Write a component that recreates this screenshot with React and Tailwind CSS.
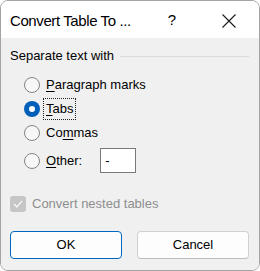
import React from 'react';

const font = { fontFamily: '"Liberation Sans", Arial, sans-serif' };

function Radio({ checked }) {
  return checked ? (
    <span className="flex h-4 w-4 shrink-0 items-center justify-center rounded-full bg-[#005fb8]">
      <span className="h-[6px] w-[6px] rounded-full bg-white" />
    </span>
  ) : (
    <span className="h-4 w-4 shrink-0 rounded-full border border-[#858585] bg-[#f7f7f7]" />
  );
}

function Option({ checked, focused, children }) {
  return (
    <div className="flex h-6 items-center">
      <Radio checked={checked} />
      <span
        className={`ml-[3px] px-[2px] py-[2px] leading-[16px] border ${focused ? 'border-dotted border-[#222]' : 'border-transparent'}`}
      >
        {children}
      </span>
    </div>
  );
}

export default function App() {
  return (
    <div className="h-[271px] w-[260px] bg-white text-[13px] text-black" style={font}>
      <div className="flex h-[271px] w-[260px] flex-col overflow-hidden rounded-[8px] border border-[#a3a3a3]">
        {/* Title bar */}
        <div className="flex h-[37px] shrink-0 items-center bg-white">
          <span className="ml-[9px] text-[15px] tracking-[-0.4px] pt-[3px]">Convert Table To ...</span>
          <span className="ml-auto mr-[46px] pt-[2px] text-[15px]">?</span>
          <svg width="14" height="14" viewBox="0 0 14 14" className="mr-[23px] mt-[2px]">
            <path d="M0.5 0.5 L13.5 13.5 M13.5 0.5 L0.5 13.5" stroke="#1a1a1a" strokeWidth="1.1" fill="none" />
          </svg>
        </div>

        {/* Body */}
        <div className="flex flex-1 flex-col bg-[#f0f0f0] px-[9px] pt-[10px]">
          <div className="flex h-4 items-center">
            <span className="leading-[16px]">Separate text with</span>
            <span className="ml-[6px] mr-[1px] h-px flex-1 bg-[#dadada]" />
          </div>

          <div className="ml-[14px] mt-[9px] flex flex-col">
            <Option><u className="underline-offset-2">P</u>aragraph marks</Option>
            <Option checked focused><u className="underline-offset-2">T</u>abs</Option>
            <Option>Co<u className="underline-offset-2">m</u>mas</Option>
            <div className="mt-[3px] flex h-[25px] items-center">
              <Radio />
              <span className="ml-[6px] leading-[16px]"><u className="underline-offset-2">O</u>ther:</span>
              <div className="ml-[18px] flex h-[25px] w-[36px] items-center border border-[#7a7a7a] bg-white pl-[4px] leading-[16px]">
                -
              </div>
            </div>
          </div>

          <div className="mt-[23px] flex h-4 items-center">
            <span className="flex h-4 w-4 items-center justify-center rounded-[3px] bg-[#c6c6c6]">
              <svg width="10" height="8" viewBox="0 0 10 8">
                <path d="M1 4 L3.8 6.8 L9 1.2" stroke="white" strokeWidth="1.2" fill="none" />
              </svg>
            </span>
            <span className="ml-[6px] leading-[16px] text-[#8e8e8e]">Convert nested tables</span>
          </div>

          <div className="mt-[19px] flex gap-[15px]">
            <button className="flex h-[28px] w-[112px] items-center justify-center rounded-[4px] border border-[#0067c0] bg-[#fdfdfd]">
              OK
            </button>
            <button className="flex h-[28px] w-[112px] items-center justify-center rounded-[4px] border border-[#d0d0d0] border-b-[#bdbdbd] bg-[#fdfdfd]">
              Cancel
            </button>
          </div>
        </div>
      </div>
    </div>
  );
}
